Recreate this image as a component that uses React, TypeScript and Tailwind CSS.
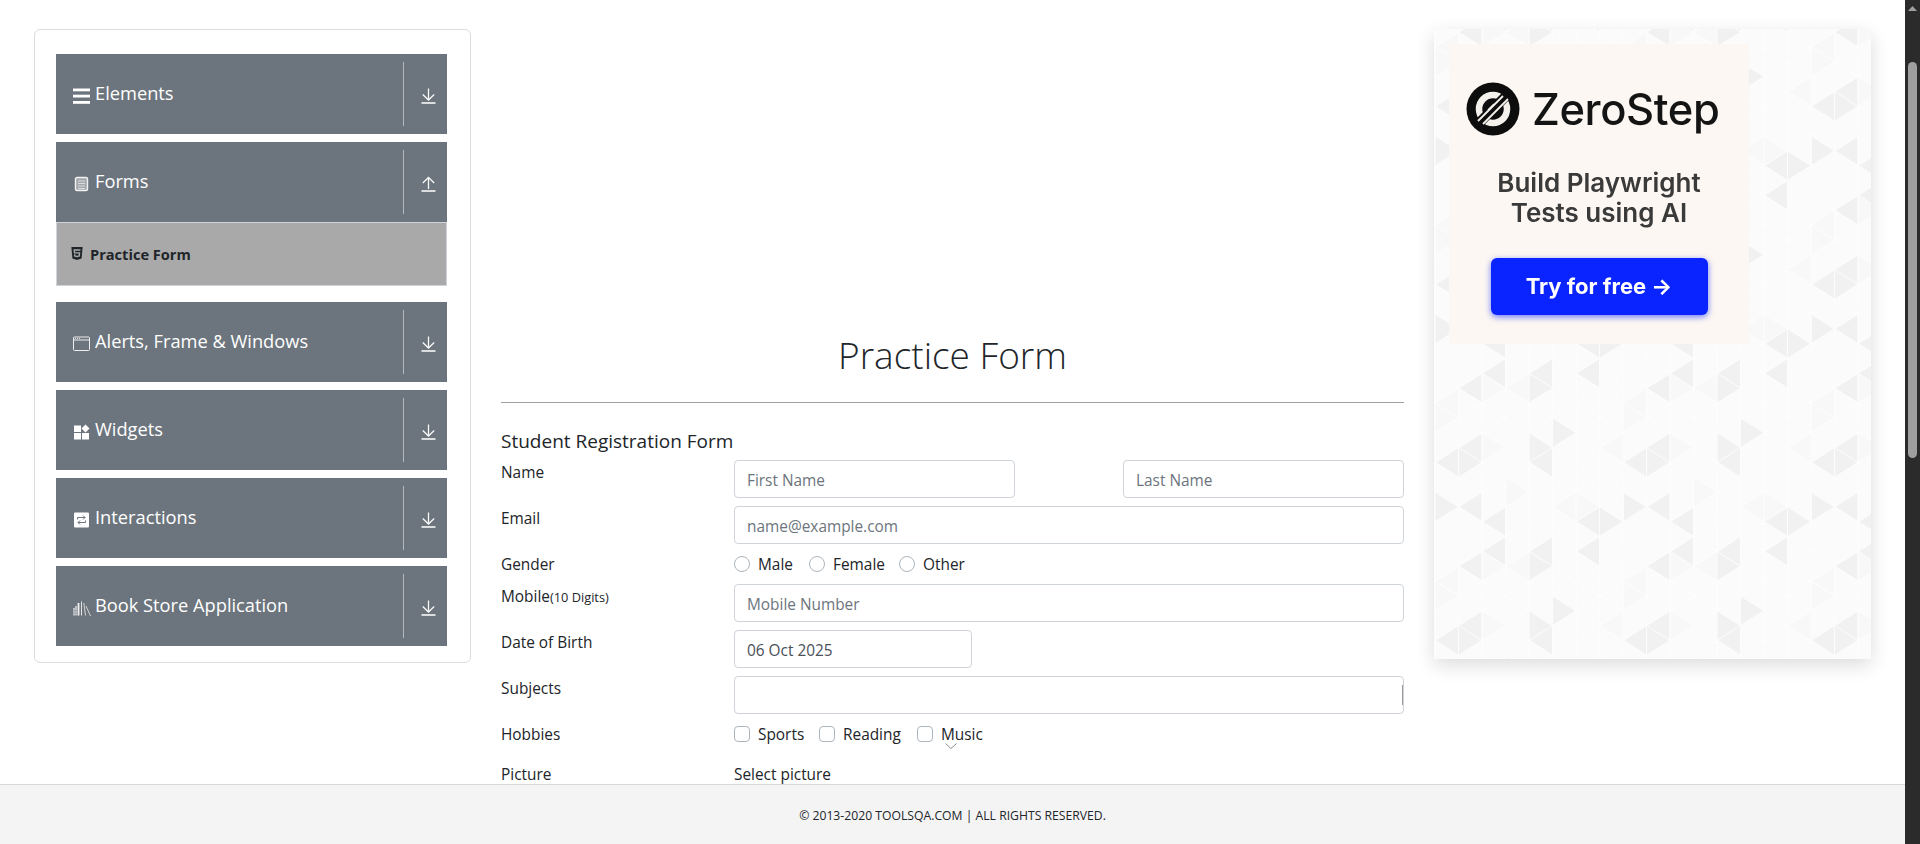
import { FaHtml5 } from "react-icons/fa"

const menu = [
  { name: "Elements", icon: "bars" },
  { name: "Forms", icon: "form", open: true },
  { name: "Alerts, Frame & Windows", icon: "window" },
  { name: "Widgets", icon: "widgets" },
  { name: "Interactions", icon: "swap" },
  { name: "Book Store Application", icon: "books" },
]

function MenuIcon({ type }: { type: string }) {
  if (type === "bars") {
    return (
      <svg width="17" height="16" viewBox="0 0 17 16" fill="#fff">
        <rect y="0.5" width="17" height="2.8" />
        <rect y="6.7" width="17" height="2.8" />
        <rect y="13" width="17" height="2.8" />
      </svg>
    )
  }
  if (type === "form") {
    return (
      <svg width="17" height="16" viewBox="0 0 17 16">
        <rect x="2.5" y="1.5" width="12" height="13" rx="1.5" fill="#a3a8ad" stroke="#f2f2f2" strokeWidth="1.4" />
        <path d="M5 5h7M5 7.5h7M5 10h7M5 12.5h7" stroke="#e8e8e8" strokeWidth="0.8" />
      </svg>
    )
  }
  if (type === "window") {
    return (
      <svg width="17" height="16" viewBox="0 0 17 16" fill="none">
        <rect x="0.5" y="1" width="16" height="13.5" rx="1" stroke="#eee" />
        <path d="M1 4h15" stroke="#eee" />
        <path d="M2 2.5h1M4 2.5h1M6 2.5h1" stroke="#ddd" />
      </svg>
    )
  }
  if (type === "widgets") {
    return (
      <svg width="17" height="16" viewBox="0 0 17 16" fill="#fff">
        <rect x="1" y="1.5" width="7" height="6.5" />
        <rect x="1" y="9" width="7" height="6.5" />
        <rect x="9" y="9" width="7" height="6.5" />
        <path d="M12.5 0.5 16.5 4.5 12.5 8.5 8.5 4.5z" />
      </svg>
    )
  }
  if (type === "swap") {
    return (
      <svg width="17" height="16" viewBox="0 0 17 16">
        <rect x="1" y="0.5" width="15" height="15" rx="1" fill="#fff" />
        <path d="M4.5 7.5V5.5h7.5M10 3.5l2 2-2 2M12.5 8.5v2H5M7 8.5l-2 2 2 2" fill="none" stroke="#6c757d" strokeWidth="1" />
      </svg>
    )
  }
  return (
    <svg width="18" height="16" viewBox="0 0 18 16" fill="none">
      <path d="M1 8v7.5M3 6v9.5" stroke="#f2f2f2" strokeWidth="1.2" />
      <path d="M5.5 3v12.5" stroke="#f2f2f2" strokeWidth="1.8" />
      <path d="M8.5 1.5v14" stroke="#e4e4e4" strokeWidth="1" />
      <path d="M0 10.5h4.5M0 13h4.5" stroke="#868d93" strokeWidth="0.6" />
      <path d="M10.8 3 12.5 15.5M13 6l4.5 10" stroke="#dcdcdc" strokeWidth="0.9" />
    </svg>
  )
}

function ArrowIcon({ up }: { up?: boolean }) {
  return (
    <svg width="15" height="16" viewBox="0 0 15 16" fill="none" stroke="#f8f8f8" strokeWidth="1.3">
      {up ? (
        <path d="M7.5 13V1.5M1.8 7 7.5 1.5 13.2 7" />
      ) : (
        <path d="M7.5 0.5V12M1.8 6.5 7.5 12l5.7-5.5" />
      )}
      <path d="M0.5 15h14" strokeWidth="1.6" />
    </svg>
  )
}

// triangles in the ad background that are darker, [apex column, row]
const darkLeft = ["2,5", "4,5", "6,5", "1,5", "2,4", "6,4", "1,3", "0,2", "4,2", "1,1"]
const darkRight = ["5,5", "0,4", "1,3", "2,2", "6,1", "5,1"]
const midLeft = ["3,5", "0,0", "5,3", "7,1"]
const midRight = ["3,5", "7,3", "3,1", "1,0", "4,3"]

function triangle(c: number, r: number, left: boolean) {
  const w = 23.5
  const h = 29.67
  const x = c * w
  const y = 18 + r * h + (((c % 2) + 2) % 2 === 1 ? h / 2 : 0)
  const bx = left ? x + w : x - w
  return `${x},${y} ${bx},${y - h / 2} ${bx},${y + h / 2}`
}

function fillFor(c: number, r: number, left: boolean) {
  const key = `${((c % 8) + 8) % 8},${((r % 6) + 6) % 6}`
  const dark = left ? darkLeft : darkRight
  const mid = left ? midLeft : midRight
  if (dark.includes(key)) return "#f1f1f1"
  if (mid.includes(key)) return "#f8f8f8"
  return "#fbfbfb"
}

function AdPattern() {
  const cols = [-1, 0, 1, 2, 3, 4, 5, 6, 7, 8, 9]
  const rows = [-1, 0, 1, 2, 3, 4, 5, 6]
  return (
    <svg className="absolute inset-0 blur-[0.5px]" width="437" height="630">
      <defs>
        <pattern id="tris" x="1" y="0" width="188" height="178.02" patternUnits="userSpaceOnUse">
          <rect width="188" height="178.02" fill="#fdfdfd" />
          {cols.map((c) =>
            rows.map((r) => (
              <g key={`${c}-${r}`}>
                <polygon points={triangle(c, r, true)} fill={fillFor(c, r, true)} stroke="#fefefe" strokeWidth="0.8" />
                <polygon points={triangle(c, r, false)} fill={fillFor(c, r, false)} stroke="#fefefe" strokeWidth="0.8" />
              </g>
            ))
          )}
        </pattern>
      </defs>
      <rect width="437" height="630" fill="url(#tris)" />
    </svg>
  )
}

function ZeroLogo() {
  return (
    <svg width="54" height="54" viewBox="0 0 54 54">
      <circle cx="27" cy="27" r="26.5" fill="#0d0d0d" />
      <circle cx="27" cy="27" r="14" fill="none" stroke="#f4f1ec" strokeWidth="6.5" />
      <path d="M11 43 43 11" stroke="#0d0d0d" strokeWidth="10" />
      <path d="M12 39 37 14M17 42 42 17" stroke="#f4f1ec" strokeWidth="1.8" />
      <path d="M22 28l6-6" stroke="#f4f1ec" strokeWidth="1.5" />
    </svg>
  )
}

const labelClass = "h-6 text-[15.4px] leading-[26px] text-[#212529]"
const inputClass =
  "h-[38px] rounded border border-[#ced4da] bg-white px-3 pt-[2px] text-[15.4px] text-[#495057] outline-none placeholder:text-[#6c757d]"

export default function App() {
  return (
    <div className="flex h-[844px] w-[1920px] overflow-hidden bg-white font-['Open_Sans',sans-serif] text-[#212529]">
      <div className="flex min-w-0 flex-1 flex-col">
        <div className="flex flex-1 items-start gap-[30px] overflow-hidden px-[34px] pt-[29px]">
          {/* left menu */}
          <div className="w-[437px] shrink-0 rounded-md border border-[#dcdcdc] pb-4 pl-[21px] pr-[23px] pt-6">
            {menu.map((item) => (
              <div key={item.name} className={item.open ? "mb-4" : "mb-2 last:mb-0"}>
                <div className="flex h-20 items-center bg-[#6c757d] text-white">
                  <div className="flex flex-1 items-center pl-[17px]">
                    <span className="mt-1 flex w-[22px]">
                      <MenuIcon type={item.icon} />
                    </span>
                    <span className="mb-[3px] text-[18.25px] leading-6">{item.name}</span>
                  </div>
                  <div className="h-16 w-px bg-[#b3b8bc]" />
                  <div className="mt-1 flex w-[43px] justify-center pl-[6px]">
                    <ArrowIcon up={item.open} />
                  </div>
                </div>
                {item.open && (
                  <div className="flex h-16 items-center border border-[#ced4da] bg-[#a9a9a9] pl-[13px]">
                    <FaHtml5 className="mb-[2px] mr-[6px] h-[15px] w-[14px] text-[#212529]" />
                    <span className="text-[14.6px] font-bold leading-5 text-[#212529]">Practice Form</span>
                  </div>
                )}
              </div>
            ))}
          </div>

          {/* form */}
          <div className="min-w-0 flex-1">
            <h1 className="mt-[302px] text-center text-[37px] font-light leading-[48px] text-[#212529]">Practice Form</h1>
            <div className="mt-[23px] border-t border-[#a0a0a0]" />
            <h5 className="mt-[26px] text-[19px] leading-6">Student Registration Form</h5>
            <div className="mt-[7px] grid grid-cols-[233px_1fr] gap-y-2">
              <div className={labelClass}>Name</div>
              <div className="flex justify-between">
                <input className={`${inputClass} w-[281px]`} placeholder="First Name" />
                <input className={`${inputClass} w-[281px]`} placeholder="Last Name" />
              </div>

              <div className={labelClass}>Email</div>
              <input className={`${inputClass} w-full`} placeholder="name@example.com" />

              <div className={labelClass}>Gender</div>
              <div className="flex h-6 text-[15.4px] leading-6">
                {[
                  ["Male", "w-[75px]"],
                  ["Female", "w-[90px]"],
                  ["Other", ""],
                ].map(([label, width]) => (
                  <label key={label} className={`flex h-6 items-center ${width}`}>
                    <input type="radio" name="gender" className="mr-2 h-4 w-4 appearance-none rounded-full border border-[#adb5bd] bg-white" />
                    <span className="pt-[2px]">{label}</span>
                  </label>
                ))}
              </div>

              <div className={labelClass}>
                Mobile<span className="text-[12.8px]">(10 Digits)</span>
              </div>
              <input className={`${inputClass} w-full`} placeholder="Mobile Number" />

              <div className={labelClass}>Date of Birth</div>
              <input className={`${inputClass} w-[238px]`} defaultValue="06 Oct 2025" />

              <div className={labelClass}>Subjects</div>
              <div className="relative">
                <input className={`${inputClass} w-full border-[#cccccc]`} />
                <span className="absolute right-[1px] top-[9px] h-5 w-px bg-[#999999]" />
              </div>

              <div className={labelClass}>Hobbies</div>
              <div className="relative flex h-6 text-[15.4px] leading-6">
                {[
                  ["Sports", "w-[85px]"],
                  ["Reading", "w-[98px]"],
                  ["Music", ""],
                ].map(([label, width]) => (
                  <label key={label} className={`flex h-6 items-center ${width}`}>
                    <input type="checkbox" className="mr-2 h-4 w-4 appearance-none rounded-[4px] border border-[#adb5bd] bg-white" />
                    <span className="pt-[2px]">{label}</span>
                  </label>
                ))}
                <svg className="absolute left-[211px] top-[21px]" width="12" height="7" viewBox="0 0 12 7" fill="none" stroke="#8a8f94">
                  <path d="M0.5 0.5 6 5.5l5.5-5" />
                </svg>
              </div>
            </div>
            <div className="mt-4 grid h-6 grid-cols-[233px_1fr] text-[15.4px] leading-[26px]">
              <div>Picture</div>
              <div>Select picture</div>
            </div>
          </div>

          {/* ad */}
          <div className="relative h-[630px] w-[437px] shrink-0 bg-[#fbfbfb] p-[15px] shadow-[0_6px_18px_rgba(0,0,0,0.14)]">
            <AdPattern />
            <div className="relative flex h-[300px] w-[300px] flex-col items-center bg-[#fcf7f2] pt-[38px] font-['Inter',sans-serif] blur-[0.4px]">
              <div className="flex items-center gap-3 self-start pl-[17px]">
                <ZeroLogo />
                <span className="text-[43.5px] font-medium leading-[54px] tracking-[-0.4px] text-[#141414]">ZeroStep</span>
              </div>
              <div className="mt-[32px] text-center text-[26px] font-semibold leading-[30px] text-[#3a3a3a]">
                Build Playwright
                <br />
                Tests using AI
              </div>
              <div className="mt-[30px] flex h-[57px] w-[217px] items-center justify-center rounded-md bg-[#0a24ff] text-[22px] font-bold text-white shadow-[0_2px_6px_rgba(10,36,255,0.6)]">
                Try for free →
              </div>
            </div>
          </div>
        </div>

        <footer className="flex h-[60px] shrink-0 items-center justify-center border-t border-[#d8d8d8] bg-[#f4f4f4] pt-[2px] text-[12.2px] leading-5 text-[#212529]">
          © 2013-2020 TOOLSQA.COM | ALL RIGHTS RESERVED.
        </footer>
      </div>

      {/* window scrollbar */}
      <div className="flex w-[15px] shrink-0 flex-col items-center bg-[#2b2b2b] pt-[6px]">
        <svg width="9" height="5" viewBox="0 0 9 5" fill="#9f9f9f">
          <path d="M4.5 0 9 5H0z" />
        </svg>
        <div className="mt-[51px] h-[396px] w-[9px] rounded-full bg-[#9f9f9f]" />
      </div>
    </div>
  )
}
